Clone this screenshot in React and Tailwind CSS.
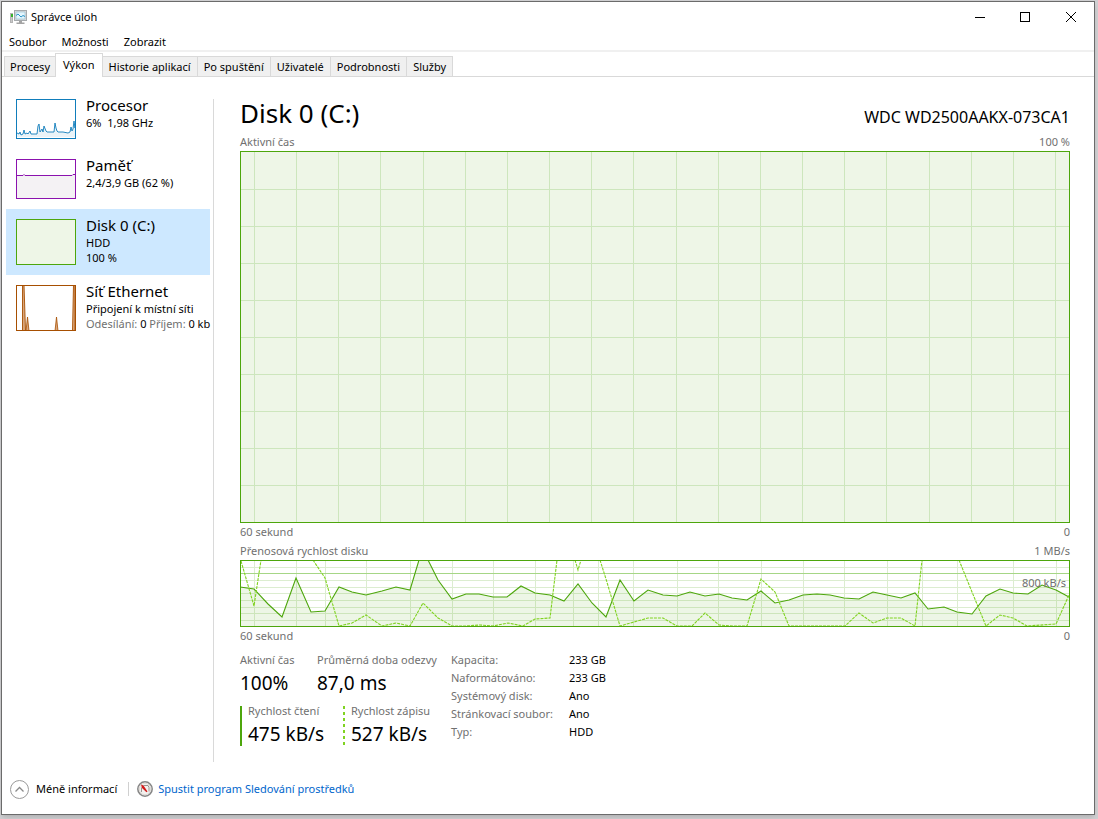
// src/App.jsx
const READ = '0,27 14,29 28,44 42,57 56,18 71,52 85,51 99,27 112,32 126,35 142,31 156,27 170,30 179,0 188,0 198,20 212,39 226,34 239,34 253,37 267,37 281,26 295,33 310,35 324,41 338,24 352,43 366,57 380,20 394,41 408,30 423,35 437,36 450,32 465,36 479,34 492,38 507,40 521,31 535,43 549,40 563,35 577,34 590,35 604,38 619,39 633,32 647,35 661,38 675,33 688,49 704,47 717,52 732,54 746,36 760,29 773,33 788,34 802,25 816,30 829,37';

// write speed leaves the scale several times, so it is split in segments
const WRITE = [
  '1,1 14,46 21,0',
  '73,0 85,18 99,66 112,63 126,55 142,66 156,63 170,66 183,43 198,58 212,66 226,66 240,65 253,66 268,63 283,66 295,59 310,58 317,0',
  '335,0 338,10 341,0',
  '360,0 366,19 380,66 408,58 423,58 437,66 452,66 465,53 479,65 493,66 507,66 521,19 535,32 549,66 605,66 619,53 633,63 647,58 661,58 675,66 682,0',
  '719,0 732,32 746,66 760,55 773,58 787,66 816,64 829,35',
];

const BIG_X = Array.from({ length: 20 }, (_, i) => Math.round(14 + i * 42.16));
const BIG_Y = Array.from({ length: 9 }, (_, i) => 38 + i * 37);
const SMALL_X = [14, 56, 85, 126, 170, 212, 253, 295, 333, 358, 393, 437, 478, 521, 563, 604, 647, 682, 717, 773, 816];
const SMALL_Y = [7, 20, 27, 33, 40, 47, 53, 60];

const TABS = ['Procesy', 'Výkon', 'Historie aplikací', 'Po spuštění', 'Uživatelé', 'Podrobnosti', 'Služby'];

const DETAILS = [
  ['Kapacita:', '233 GB'],
  ['Naformátováno:', '233 GB'],
  ['Systémový disk:', 'Ano'],
  ['Stránkovací soubor:', 'Ano'],
  ['Typ:', 'HDD'],
];

function AppIcon() {
  return (
    <svg width="17" height="16" viewBox="0 0 17 16" aria-hidden="true">
      <rect x="0.5" y="4.5" width="2" height="9" fill="#c9c9c9" stroke="#b4b4b4" />
      <rect x="1" y="5" width="2" height="3" fill="#35b32a" />
      <rect x="4.5" y="1.5" width="12" height="10" fill="#dcdcdc" stroke="#a5a9ac" />
      <rect x="6" y="3" width="9" height="7" fill="#e3f5fd" stroke="#8fb9cd" strokeWidth="0.6" />
      <path d="M6 6.500l2-1.500 3 3 2-1.500 2 1" fill="none" stroke="#2a94c8" strokeWidth="1" />
      <path d="M9 12h3v1.500h2.500V15H6.500v-1.500H9z" fill="#a4a4a4" />
    </svg>
  );
}

function MonitorIcon() {
  return (
    <svg width="16" height="16" viewBox="0 0 16 16" aria-hidden="true">
      <circle cx="8" cy="8" r="7.200" fill="#f3f1ef" stroke="#858585" strokeWidth="1.500" />
      <circle cx="8" cy="8" r="5.700" fill="none" stroke="#dedad6" />
      <path d="M4.500 11V6.500M6.500 4.500H11l1 2v4" fill="none" stroke="#9a9490" />
      <path d="M4 3.500l2.500 1L10.500 10.500l-1 .800L5 7z" fill="#d21a1a" />
    </svg>
  );
}

function CpuThumb() {
  return (
    <svg className="block h-10 w-15" viewBox="0 0 60 40">
      <path d="M1 34l2 1 1-2 1 3 2-1 1-4 1 4 2-1 1 1 2-3 1 3h6l1-8 1-2 1 8 2-3 1 3 1-6 2 5 1 1h7l1-9 1 5 1 3 1 1h5l5 1 2-1 1-5 1 4 1-2 1-8 1 7 1-10v19H1z" fill="#e9f3f8" stroke="none" />
      <path d="M1 34l2 1 1-2 1 3 2-1 1-4 1 4 2-1 1 1 2-3 1 3h6l1-8 1-2 1 8 2-3 1 3 1-6 2 5 1 1h7l1-9 1 5 1 3 1 1h5l5 1 2-1 1-5 1 4 1-2 1-8 1 7 1-10" fill="none" stroke="#117dbb" strokeWidth="0.900" />
      <rect x="0.500" y="0.500" width="59" height="39" fill="none" stroke="#117dbb" />
    </svg>
  );
}

function MemoryThumb() {
  return (
    <svg className="block h-10 w-15" viewBox="0 0 60 40">
      <rect x="1" y="16" width="58" height="23" fill="#f4f2f4" />
      <path d="M1 16.500h6l1-1 1 1h47l1-1h2" fill="none" stroke="#8b12ae" />
      <rect x="0.500" y="0.500" width="59" height="39" fill="none" stroke="#8b12ae" />
    </svg>
  );
}

function DiskThumb() {
  return (
    <svg className="block h-[46px] w-15" viewBox="0 0 60 46">
      <rect x="0.500" y="0.500" width="59" height="45" fill="#eef6e7" stroke="#4da60c" />
    </svg>
  );
}

function NetThumb() {
  return (
    <svg className="block h-[46px] w-15" viewBox="0 0 60 46">
      <path d="M6.500 46V0h1.500l1.500 46zM56.500 46L57.500 0H59v46z" fill="#d9a77d" stroke="#a74f01" strokeWidth="0.900" />
      <path d="M10 46l1.500-14L13 46zM39 46l1.500-14L42 46z" fill="#d9a77d" stroke="#a74f01" strokeWidth="0.800" />
      <rect x="0.500" y="0.500" width="59" height="45" fill="none" stroke="#a74f01" />
    </svg>
  );
}

function SideItem({ thumb, title, selected, children }) {
  return (
    <button
      type="button"
      className={`flex w-51 items-start gap-[10px] py-[10px] pl-[10px] text-left whitespace-nowrap ${selected ? 'bg-[#cde8ff]' : 'bg-white'}`}
    >
      <span className="shrink-0">{thumb}</span>
      <span className="-mt-[3px] block">
        <span className="block text-[15px] leading-[19px]">{title}</span>
        {children}
      </span>
    </button>
  );
}

function ActiveChart() {
  return (
    <svg className="block h-[372px] w-full" viewBox="0 0 830 372" preserveAspectRatio="none">
      <rect width="830" height="372" fill="#eef6e7" />
      {BIG_X.map(x => <path key={x} d={`M${x + 0.5} 0V372`} stroke="#cde6bd" />)}
      {BIG_Y.map(y => <path key={y} d={`M0 ${y + 0.5}H830`} stroke="#cde6bd" />)}
      <rect x="0.500" y="0.500" width="829" height="371" fill="none" stroke="#4da60c" />
    </svg>
  );
}

function TransferChart() {
  return (
    <svg className="block h-[67px] w-full" viewBox="0 0 830 67" preserveAspectRatio="none">
      {SMALL_X.map(x => <path key={x} d={`M${x + 0.5} 0V67`} stroke="#dcedd0" />)}
      {SMALL_Y.map(y => <path key={y} d={`M0 ${y + 0.5}H830`} stroke="#dcedd0" />)}
      <path d="M0 13.500H830" stroke="#a6d686" />
      <polygon points={`0,67 ${READ} 829,67`} fill="#4da60c" fillOpacity="0.100" />
      <polyline points={READ} fill="none" stroke="#4da60c" strokeWidth="1.100" />
      {WRITE.map(p => (
        <polyline key={p} points={p} fill="none" stroke="#80d321" strokeWidth="1.100" strokeDasharray="3 1" />
      ))}
      <rect x="0.500" y="0.500" width="829" height="66" fill="none" stroke="#4da60c" />
    </svg>
  );
}

function Stat({ label, value, className }) {
  return (
    <div className={className}>
      <div className="text-[#707070]">{label}</div>
      <div className="text-[19px] leading-[30px]">{value}</div>
    </div>
  );
}

function ChartCaption({ left, right }) {
  return (
    <div className="flex justify-between leading-[18px] text-[#707070]">
      <span>{left}</span>
      <span>{right}</span>
    </div>
  );
}

export default function App() {
  return (
    <div className="flex min-h-screen bg-[#d0d0d2] pt-px pr-[3px] pb-1 pl-px font-['Noto_Sans','Open_Sans',sans-serif] text-[11px] leading-4 text-black">
      <div className="flex min-w-0 flex-1 flex-col border border-[#6b6b6b] bg-white shadow-md">
        <header className="flex h-[29px] items-center pl-2">
          <AppIcon />
          <h1 className="ml-1 flex-1">Správce úloh</h1>
          <button type="button" aria-label="Minimalizovat" className="flex h-7 w-[45px] items-center justify-center">
            <svg width="10" height="10"><path d="M0 5.500h10" stroke="#000" /></svg>
          </button>
          <button type="button" aria-label="Maximalizovat" className="flex h-7 w-[45px] items-center justify-center">
            <svg width="10" height="10"><rect x="0.500" y="0.500" width="9" height="9" fill="none" stroke="#000" /></svg>
          </button>
          <button type="button" aria-label="Zavřít" className="flex h-7 w-[47px] items-center justify-center">
            <svg width="10" height="10"><path d="M0 0l10 10M10 0L0 10" stroke="#000" /></svg>
          </button>
        </header>

        <nav className="flex h-[21px] items-center gap-[15px] border-b-2 border-[#f0f0f0] pt-[2px] pl-[7px]">
          <button type="button">Soubor</button>
          <button type="button">Možnosti</button>
          <button type="button">Zobrazit</button>
        </nav>

        <div role="tablist" className="flex h-[25px] items-end border-b border-[#d9d9d9] pl-[2px]">
          {TABS.map(t => (
            <button
              key={t}
              type="button"
              role="tab"
              aria-selected={t === 'Výkon'}
              className={t === 'Výkon'
                ? '-mb-px h-6 border border-b-0 border-[#d9d9d9] bg-white px-[7px] pb-[2px]'
                : 'h-5 border border-b-0 border-l-0 border-[#d9d9d9] bg-[#f0f0f0] px-[6px] first:border-r-0 first:border-l first:px-[5px]'}
            >
              {t}
            </button>
          ))}
        </div>

        <div className="flex flex-1">
          <aside className="w-[211px] shrink-0 pt-3 pl-1">
            <SideItem thumb={<CpuThumb />} title="Procesor">
              <span className="block">6%&nbsp; 1,98 GHz</span>
            </SideItem>
            <SideItem thumb={<MemoryThumb />} title="Paměť">
              <span className="block">2,4/3,9 GB (62 %)</span>
            </SideItem>
            <SideItem thumb={<DiskThumb />} title="Disk 0 (C:)" selected>
              <span className="block leading-[15px]">HDD</span>
              <span className="block leading-[15px]">100 %</span>
            </SideItem>
            <SideItem thumb={<NetThumb />} title="Síť Ethernet">
              <span className="block leading-[15px]">Připojení k místní síti</span>
              <span className="block leading-[15px]">
                <span className="text-[#707070]">Odesílání:</span> 0 <span className="text-[#707070]">Příjem:</span> 0 kb
              </span>
            </SideItem>
          </aside>

          <main className="mt-[22px] min-w-0 flex-1 border-l border-[#d9d9d9] pr-6 pl-[26px]">
            <div className="flex h-[34px] items-start justify-between">
              <h2 className="text-[26px] leading-7">Disk 0 (C:)</h2>
              <span className="pt-2 text-[16px] leading-5">WDC WD2500AAKX-073CA1</span>
            </div>
            <ChartCaption left="Aktivní čas" right="100 %" />
            <ActiveChart />
            <ChartCaption left="60 sekund" right="0" />
            <div className="pt-px">
              <ChartCaption left="Přenosová rychlost disku" right="1 MB/s" />
            </div>
            <div className="relative">
              <TransferChart />
              <span className="absolute top-[15px] right-1 text-[#707070]">800 kB/s</span>
            </div>
            <ChartCaption left="60 sekund" right="0" />

            <div className="flex pt-[6px]">
              <div className="w-[211px] pt-px">
                <div className="flex">
                  <Stat label="Aktivní čas" value="100%" className="w-[77px]" />
                  <Stat label="Průměrná doba odezvy" value="87,0 ms" className="whitespace-nowrap" />
                </div>
                <div className="mt-2 flex">
                  <div className="mr-[20px] flex h-10 items-center border-l-2 border-[#4da60c] pl-[6px]">
                    <Stat label="Rychlost čtení" value="475 kB/s" className="w-[75px] whitespace-nowrap" />
                  </div>
                  <div className="flex h-10 items-center gap-[6px]">
                    <svg width="2" height="40"><path d="M1 0v40" stroke="#80d321" strokeWidth="2" strokeDasharray="3 3" /></svg>
                    <Stat label="Rychlost zápisu" value="527 kB/s" className="whitespace-nowrap" />
                  </div>
                </div>
              </div>
              <dl className="grid grid-cols-[118px_auto] content-start leading-[18px]">
                {DETAILS.map(([name, value]) => (
                  <div key={name} className="contents">
                    <dt className="text-[#707070]">{name}</dt>
                    <dd>{value}</dd>
                  </div>
                ))}
              </dl>
            </div>
          </main>
        </div>

        <footer className="flex h-[52px] items-center pt-[2px] pl-2">
          <button type="button" className="flex items-center gap-[7px]">
            <svg width="19" height="19" viewBox="0 0 19 19">
              <circle cx="9.500" cy="9.500" r="9" fill="none" stroke="#9a9a9a" />
              <path d="M5.500 11.500l4-4 4 4" fill="none" stroke="#8a8a8a" strokeWidth="1.300" />
            </svg>
            Méně informací
          </button>
          <span className="mr-2 ml-[11px] h-[14px] w-px bg-[#d0d0d0]" />
          <a href="#resmon" className="flex items-center gap-[5px] text-[#0066cc]">
            <MonitorIcon />
            Spustit program Sledování prostředků
          </a>
        </footer>
      </div>
    </div>
  );
}
